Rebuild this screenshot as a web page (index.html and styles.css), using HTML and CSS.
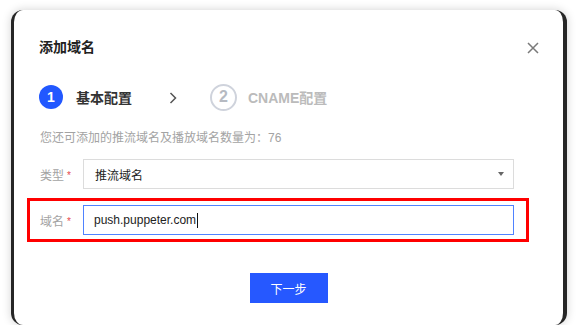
FILE: index.html
```html
<!DOCTYPE html>
<html lang="zh-CN">
<head>
<meta charset="UTF-8" />
<meta name="viewport" content="width=device-width, initial-scale=1" />
<title>添加域名</title>
<link rel="stylesheet" href="styles.css">
</head>
<body>
<div class="window">
  <div class="modal" role="dialog" aria-label="添加域名">
    <div class="modal-header">
      <h1 class="modal-title">添加域名</h1>
      <button class="close-btn" aria-label="关闭">
        <svg width="12" height="12" viewBox="0 0 12 12" aria-hidden="true">
          <path d="M1 1 L11 11 M11 1 L1 11" stroke="#7a7a7a" stroke-width="1.5" fill="none" />
        </svg>
      </button>
    </div>

    <div class="steps">
      <div class="step step-active">
        <span class="step-num">1</span>
        <span class="step-label">基本配置</span>
      </div>
      <svg class="step-arrow" width="8" height="12" viewBox="0 0 8 12" aria-hidden="true">
        <path d="M1.5 1 L6.5 6 L1.5 11" stroke="#555" stroke-width="1.5" fill="none" />
      </svg>
      <div class="step">
        <span class="step-num">2</span>
        <span class="step-label">CNAME配置</span>
      </div>
    </div>

    <div class="hint">您还可添加的推流域名及播放域名数量为：76</div>

    <div class="form">
      <div class="form-row">
        <label class="form-label">类型<span class="required">*</span></label>
        <div class="select">
          <span>推流域名</span>
          <span class="caret-down"></span>
        </div>
      </div>
      <div class="form-row form-row-marked">
        <label class="form-label">域名<span class="required">*</span></label>
        <div class="text-input is-focused">push.puppeter.com<span class="text-cursor"></span></div>
      </div>
    </div>

    <div class="modal-footer">
      <button class="btn-primary">下一步</button>
    </div>
  </div>
</div>
</body>
</html>
```

FILE: styles.css
```css
/* Base */
*, *::before, *::after {
  box-sizing: border-box;
}
body {
  margin: 0;
  background: #fff;
  font-family: "Liberation Sans", "Noto Sans CJK SC", sans-serif;
  color: #333;
}

/* Window frame around the dialog */
.window {
  margin: 10px 0 0 11px;
  width: 556px;
  height: 315px;
  border-radius: 12px;
  overflow: hidden;
  background: #262626;
  border-left: 3px solid #262626;
  border-right: 4px solid #262626;
  box-shadow: 0 0 10px rgba(0, 0, 0, 0.18);
}
.modal {
  height: 100%;
  background: #fff;
  padding: 27px 24px 0 25px;
}

/* Header */
.modal-header {
  display: flex;
  align-items: center;
  justify-content: space-between;
  height: 20px;
}
.modal-title {
  margin: 0;
  font-size: 14px;
  font-weight: 700;
  line-height: 20px;
  color: #222;
}
.close-btn {
  display: flex;
  padding: 0;
  border: none;
  background: none;
  cursor: pointer;
  margin-top: 2px;
}

/* Steps */
.steps {
  display: flex;
  align-items: center;
  margin-top: 28px;
  height: 24px;
}
.step {
  display: flex;
  align-items: center;
}
.step-num {
  display: flex;
  align-items: center;
  justify-content: center;
  width: 27px;
  height: 27px;
  border-radius: 50%;
  border: 2px solid #cfd3dc;
  color: #b6bac2;
  font-size: 16px;
  font-weight: 700;
}
.step-active .step-num {
  width: 24px;
  height: 24px;
  border: none;
  background: #2258ff;
  color: #fff;
  font-size: 14px;
}
.step-label {
  margin-left: 11px;
  font-size: 14px;
  font-weight: 700;
  color: #bbb;
}
.step-active .step-label {
  margin-left: 13px;
  color: #333;
}
.step-arrow {
  margin: 1px 33px 0 37px;
}

/* Hint */
.hint {
  margin-top: 20px;
  font-size: 12px;
  line-height: 18px;
  color: #a3a3a3;
  padding-left: 1px;
}

/* Form */
.form {
  margin-top: 12px;
  display: flex;
  flex-direction: column;
  gap: 16px;
}
.form-row {
  display: flex;
  align-items: center;
}
.form-row-marked {
  position: relative;
}
.form-row-marked::after {
  content: "";
  position: absolute;
  top: -7px;
  bottom: -7px;
  left: -12px;
  right: 10px;
  border: 3px solid #ff0000;
  pointer-events: none;
}
.form-label {
  width: 44px;
  padding-left: 1px;
  font-size: 12px;
  color: #a3a3a3;
}
.required {
  color: #e5484d;
  margin-left: 3px;
  font-size: 10px;
  vertical-align: 1px;
}
.select,
.text-input {
  display: flex;
  align-items: center;
  width: 431px;
  height: 30px;
  padding: 0 9px 0 11px;
  border: 1px solid #dcdcdc;
  font-size: 12px;
  color: #222;
  background: #fff;
}
.select {
  justify-content: space-between;
}
.caret-down {
  width: 0;
  height: 0;
  border-left: 3px solid transparent;
  border-right: 3px solid transparent;
  border-top: 4px solid #666;
}
.text-input.is-focused {
  border-color: #4f82ff;
  padding-left: 10px;
}
.text-cursor {
  display: inline-block;
  width: 1px;
  height: 15px;
  margin-left: 1px;
  background: #111;
}

/* Footer */
.modal-footer {
  display: flex;
  justify-content: center;
  margin-top: 38px;
  padding-right: 1px;
}
.btn-primary {
  width: 78px;
  height: 30px;
  border: none;
  background: #2658ff;
  color: #fff;
  font-family: inherit;
  font-size: 12px;
  cursor: pointer;
}
```
